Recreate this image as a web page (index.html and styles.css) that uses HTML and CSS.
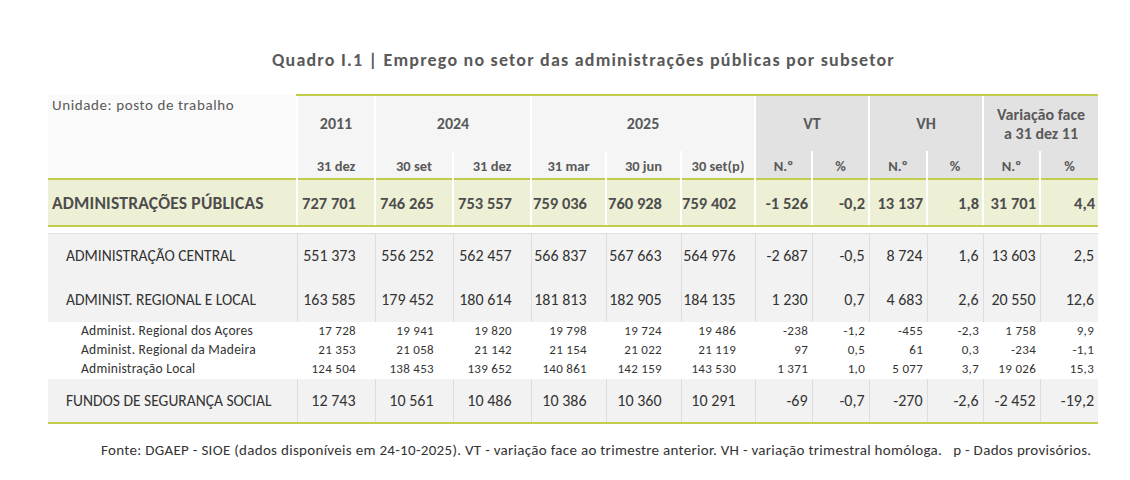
FILE: index.html
```html
<!DOCTYPE html>
<html lang="pt">
<head>
<meta charset="utf-8">
<title>Quadro I.1</title>
<link rel="stylesheet" href="styles.css">
</head>
<body>
<div class="page">
  <h1 class="title">Quadro I.1 | Emprego no setor das administrações públicas por subsetor</h1>
  <table class="tbl">
    <colgroup>
      <col class="c-label">
      <col class="c78"><col class="c78"><col class="c78">
      <col class="c75"><col class="c75"><col class="c74">
      <col class="c57"><col class="c57"><col class="c58"><col class="c56"><col class="c57"><col class="c58">
    </colgroup>
    <thead>
      <tr class="h1">
        <th class="unit" rowspan="2">Unidade: posto de trabalho</th>
        <th class="lt">2011</th>
        <th class="lt" colspan="2">2024</th>
        <th class="lt" colspan="3">2025</th>
        <th class="dk" colspan="2">VT</th>
        <th class="dk" colspan="2">VH</th>
        <th class="dk var" colspan="2">Variação face<br>a 31 dez 11</th>
      </tr>
      <tr class="h2">
        <th class="lt">31 dez</th>
        <th class="lt">30 set</th>
        <th class="lt">31 dez</th>
        <th class="lt">31 mar</th>
        <th class="lt">30 jun</th>
        <th class="lt">30 set(p)</th>
        <th class="dk">N.º</th>
        <th class="dk">%</th>
        <th class="dk">N.º</th>
        <th class="dk">%</th>
        <th class="dk">N.º</th>
        <th class="dk">%</th>
      </tr>
    </thead>
    <tbody class="total">
      <tr>
        <td class="lbl">ADMINISTRAÇÕES PÚBLICAS</td>
        <td class="n">727 701</td><td class="n">746 265</td><td class="n">753 557</td><td class="n">759 036</td><td class="n">760 928</td><td class="n">759 402</td>
        <td class="v">-1 526</td><td class="v">-0,2</td><td class="v">13 137</td><td class="v">1,8</td><td class="v">31 701</td><td class="v">4,4</td>
      </tr>
    </tbody>
    <tbody class="gap"><tr><td colspan="13"></td></tr></tbody>
    <tbody class="body">
      <tr class="main r1">
        <td class="lbl">ADMINISTRAÇÃO CENTRAL</td>
        <td class="n">551 373</td><td class="n">556 252</td><td class="n">562 457</td><td class="n">566 837</td><td class="n">567 663</td><td class="n">564 976</td>
        <td class="v">-2 687</td><td class="v">-0,5</td><td class="v">8 724</td><td class="v">1,6</td><td class="v">13 603</td><td class="v">2,5</td>
      </tr>
      <tr class="main r2">
        <td class="lbl">ADMINIST. REGIONAL E LOCAL</td>
        <td class="n">163 585</td><td class="n">179 452</td><td class="n">180 614</td><td class="n">181 813</td><td class="n">182 905</td><td class="n">184 135</td>
        <td class="v">1 230</td><td class="v">0,7</td><td class="v">4 683</td><td class="v">2,6</td><td class="v">20 550</td><td class="v">12,6</td>
      </tr>
      <tr class="sub">
        <td class="lbl">Administ. Regional dos Açores</td>
        <td class="n">17 728</td><td class="n">19 941</td><td class="n">19 820</td><td class="n">19 798</td><td class="n">19 724</td><td class="n">19 486</td>
        <td class="v">-238</td><td class="v">-1,2</td><td class="v">-455</td><td class="v">-2,3</td><td class="v">1 758</td><td class="v">9,9</td>
      </tr>
      <tr class="sub">
        <td class="lbl">Administ. Regional da Madeira</td>
        <td class="n">21 353</td><td class="n">21 058</td><td class="n">21 142</td><td class="n">21 154</td><td class="n">21 022</td><td class="n">21 119</td>
        <td class="v">97</td><td class="v">0,5</td><td class="v">61</td><td class="v">0,3</td><td class="v">-234</td><td class="v">-1,1</td>
      </tr>
      <tr class="sub">
        <td class="lbl">Administração Local</td>
        <td class="n">124 504</td><td class="n">138 453</td><td class="n">139 652</td><td class="n">140 861</td><td class="n">142 159</td><td class="n">143 530</td>
        <td class="v">1 371</td><td class="v">1,0</td><td class="v">5 077</td><td class="v">3,7</td><td class="v">19 026</td><td class="v">15,3</td>
      </tr>
      <tr class="main r3">
        <td class="lbl">FUNDOS DE SEGURANÇA SOCIAL</td>
        <td class="n">12 743</td><td class="n">10 561</td><td class="n">10 486</td><td class="n">10 386</td><td class="n">10 360</td><td class="n">10 291</td>
        <td class="v">-69</td><td class="v">-0,7</td><td class="v">-270</td><td class="v">-2,6</td><td class="v">-2 452</td><td class="v">-19,2</td>
      </tr>
    </tbody>
  </table>
  <p class="source">Fonte: DGAEP - SIOE (dados disponíveis em 24-10-2025). VT - variação face ao trimestre anterior. VH - variação trimestral homóloga. &nbsp;&nbsp;p - Dados provisórios.</p>
</div>
</body>
</html>
```
FILE: styles.css
```css
* { box-sizing: border-box; }
html, body { margin: 0; padding: 0; background: #ffffff; }
body { font-family: Carlito, Lato, "Open Sans", sans-serif; color: #404040; }

.page { width: 1130px; height: 480px; padding-top: 47px; }

.title {
  margin: 0;
  height: 47px;
  text-align: center;
  padding-left: 37px;
  font-size: 18px;
  letter-spacing: 1.2px;
  font-weight: 700;
  color: #595959;
  line-height: 26px;
}

.tbl {
  margin-left: 48px;
  width: 1050px;
  table-layout: fixed;
  border-collapse: collapse;
}
.c-label { width: 249px; }
.c78 { width: 78px; }
.c75 { width: 75px; }
.c74 { width: 74px; }
.c57 { width: 57px; }
.c58 { width: 58px; }
.c56 { width: 56px; }

.tbl th, .tbl td { padding: 0; white-space: nowrap; }

/* header */
.tbl th { font-weight: 700; color: #595959; text-align: center; }
.h1 th { font-size: 16px; }
.h2 th { font-size: 14.5px; padding-top: 2px; }
.h1 th.lt, .h1 th.dk { border-top: 2px solid #c3cd4d; }
.h1 { height: 56px; }
.h2 { height: 28px; }
.tbl th.lt { background: #f5f5f5; border-left: 2px solid #ffffff; }
.tbl th.dk { background: #e2e2e2; border-left: 2px solid #ffffff; }
.h1 th.var { line-height: 19px; padding-top: 1px; }
.tbl th.unit {
  background: #fafafa;
  vertical-align: top;
  text-align: left;
  font-weight: 400;
  font-size: 15px;
  letter-spacing: 0.6px;
  color: #595959;
  padding: 1px 0 0 4px;
}

/* total row */
.total tr { height: 47px; }
.total td {
  background: #eef0d5;
  border-top: 2px solid #c3cd4d;
  border-bottom: 2px solid #c3cd4d;
  border-left: 2px solid #ffffff;
  font-weight: 700;
  font-size: 16.5px;
  color: #4d4d4d;
}
.total td.lbl { border-left: none; padding-left: 4px; font-size: 17.5px; letter-spacing: 0.2px; }
.total td.n { text-align: right; padding-right: 18px; }
.total td.v { text-align: right; padding-right: 3px; }

.gap tr { height: 7px; }
.gap td { background: #ffffff; }

/* body */
.body td { font-size: 16px; color: #333333; }
.body td.lbl { font-size: 15.5px; }
.body .main td { background: #f2f2f2; border-left: 1px solid #dddddd; }
.body .main td.lbl { border-left: none; padding-left: 18px; }
.body .r1 td { border-top: 1px solid #e0e0e0; height: 44px; }
.body .r2 td { height: 45px; }
.body .r3 td { height: 44px; border-bottom: 2px solid #c3cd4d; }
.body .sub td { height: 19px; background: #ffffff; font-size: 13px; letter-spacing: 0.3px; line-height: 16px; padding-bottom: 2px; }
.body .sub td.lbl { padding-left: 33px; font-size: 13.5px; letter-spacing: 0.25px; }
.body td.n { text-align: right; padding-right: 19px; }
.body td.v { text-align: right; padding-right: 4px; }

.source {
  margin: 17px 0 0 101px;
  font-size: 15px;
  letter-spacing: 0.3px;
  color: #333333;
  white-space: nowrap;
}
```
